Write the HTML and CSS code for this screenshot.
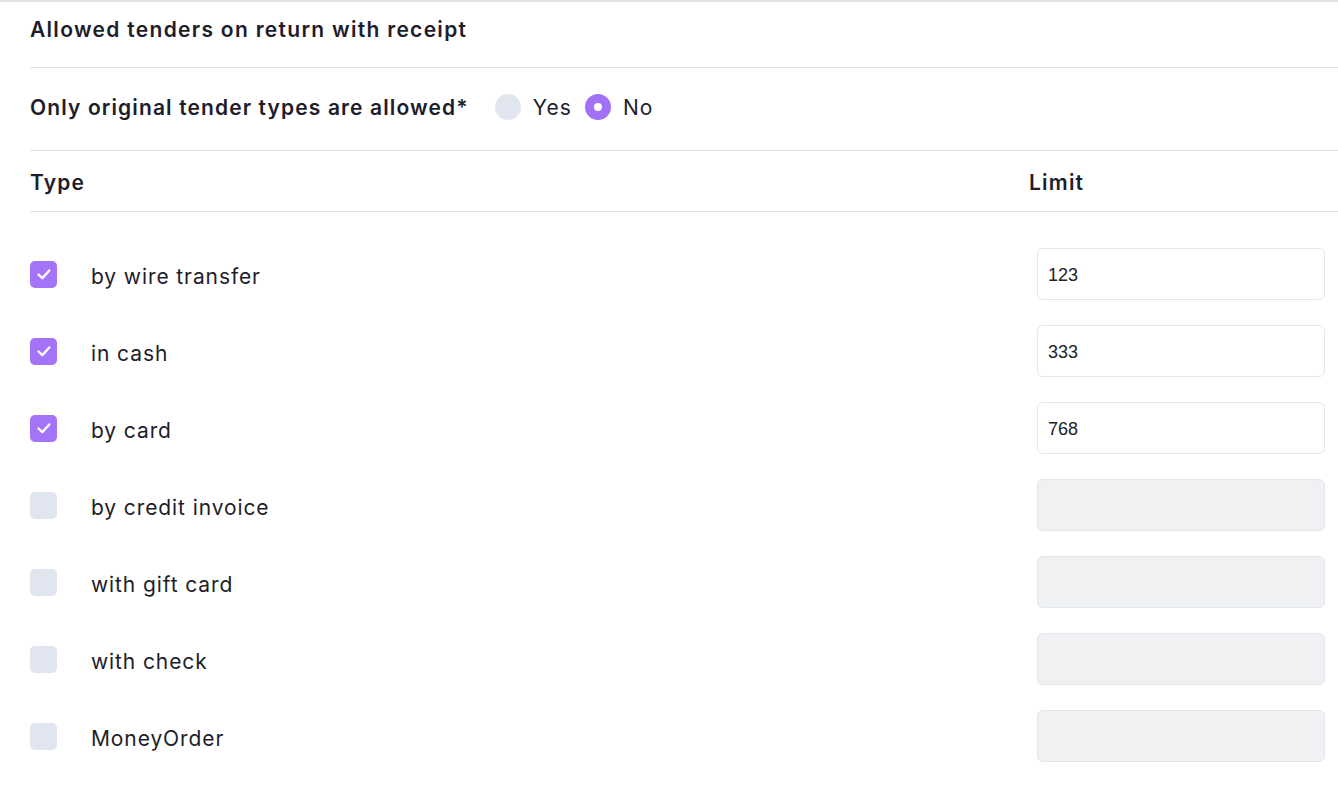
FILE: index.html
```html
<!DOCTYPE html>
<html lang="en">
<head>
<meta charset="utf-8">
<title>Allowed tenders</title>
<link rel="stylesheet" href="styles.css">
</head>
<body>
<div class="page">
  <h2 class="title">Allowed tenders on return with receipt</h2>
  <div class="option-row">
    <span class="option-label">Only original tender types are allowed*</span>
    <label class="radio"><span class="radio-dot"></span><span>Yes</span></label>
    <label class="radio"><span class="radio-dot checked"></span><span>No</span></label>
  </div>
  <div class="table-head">
    <span class="col-type">Type</span>
    <span class="col-limit">Limit</span>
  </div>
  <div class="rows">
    <div class="row">
      <span class="check checked"><svg viewBox="0 0 18 18" width="18" height="18"><path d="M3.5 9.5l3.8 3.6 7-7.6" fill="none" stroke="#fff" stroke-width="2.4" stroke-linecap="round" stroke-linejoin="round"/></svg></span>
      <span class="row-label">by wire transfer</span>
      <div class="input">123</div>
    </div>
    <div class="row">
      <span class="check checked"><svg viewBox="0 0 18 18" width="18" height="18"><path d="M3.5 9.5l3.8 3.6 7-7.6" fill="none" stroke="#fff" stroke-width="2.4" stroke-linecap="round" stroke-linejoin="round"/></svg></span>
      <span class="row-label">in cash</span>
      <div class="input">333</div>
    </div>
    <div class="row">
      <span class="check checked"><svg viewBox="0 0 18 18" width="18" height="18"><path d="M3.5 9.5l3.8 3.6 7-7.6" fill="none" stroke="#fff" stroke-width="2.4" stroke-linecap="round" stroke-linejoin="round"/></svg></span>
      <span class="row-label">by card</span>
      <div class="input">768</div>
    </div>
    <div class="row">
      <span class="check"></span>
      <span class="row-label">by credit invoice</span>
      <div class="input disabled"></div>
    </div>
    <div class="row">
      <span class="check"></span>
      <span class="row-label">with gift card</span>
      <div class="input disabled"></div>
    </div>
    <div class="row">
      <span class="check"></span>
      <span class="row-label">with check</span>
      <div class="input disabled"></div>
    </div>
    <div class="row">
      <span class="check"></span>
      <span class="row-label">MoneyOrder</span>
      <div class="input disabled"></div>
    </div>
  </div>
</div>
</body>
</html>
```

FILE: styles.css
```css
html, body {
  margin: 0;
  padding: 0;
  background: #fff;
}
body {
  border-top: 2px solid #e1e1e3;
  font-family: Inter, "Noto Sans", sans-serif;
  color: #1e1d2b;
}
.page {
  padding-left: 30px;
}
.title {
  margin: 0;
  height: 66px;
  box-sizing: border-box;
  padding-top: 14px;
  font-size: 21px;
  font-weight: 600;
  letter-spacing: 1.3px;
  line-height: 28px;
  border-bottom: 1px solid #e3e4ea;
}
.option-row {
  display: flex;
  align-items: center;
  height: 83px;
  box-sizing: border-box;
  padding-bottom: 4px;
  border-bottom: 1px solid #e3e4ea;
  font-size: 21px;
  letter-spacing: 1.1px;
}
.option-label {
  font-weight: 600;
  letter-spacing: 1.12px;
  margin-right: 26px;
}
.radio {
  display: flex;
  align-items: center;
  gap: 12px;
  margin-right: 13px;
}
.radio-dot {
  width: 26px;
  height: 26px;
  border-radius: 50%;
  background: #e1e5ef;
  box-sizing: border-box;
}
.radio-dot.checked {
  background: #fff;
  border: 9px solid #a371f7;
}
.table-head {
  display: flex;
  align-items: center;
  height: 61px;
  box-sizing: border-box;
  padding-top: 2px;
  border-bottom: 1px solid #e3e4ea;
  font-size: 21px;
  font-weight: 600;
  letter-spacing: 1.2px;
}
.col-type {
  flex: 1;
}
.col-limit {
  width: 309px;
}
.rows {
  display: flex;
  flex-direction: column;
  gap: 25px;
  padding-top: 36px;
}
.row {
  display: flex;
  align-items: center;
  height: 52px;
}
.check {
  width: 27px;
  height: 27px;
  border-radius: 5px;
  background: #e1e5ef;
  margin-right: 34px;
  display: flex;
  align-items: center;
  justify-content: center;
}
.check.checked {
  background: #a373f8;
}
.row-label {
  flex: 1;
  font-size: 21px;
  letter-spacing: 0.9px;
  padding-top: 4px;
}
.input {
  width: 288px;
  height: 52px;
  box-sizing: border-box;
  border: 1px solid #e2e5ec;
  border-radius: 6px;
  margin-right: 13px;
  padding-left: 10px;
  padding-top: 2px;
  display: flex;
  align-items: center;
  font-family: "Liberation Sans", Arial, sans-serif;
  font-size: 18px;
  color: #222;
}
.input.disabled {
  background: #f0f1f3;
}
```
